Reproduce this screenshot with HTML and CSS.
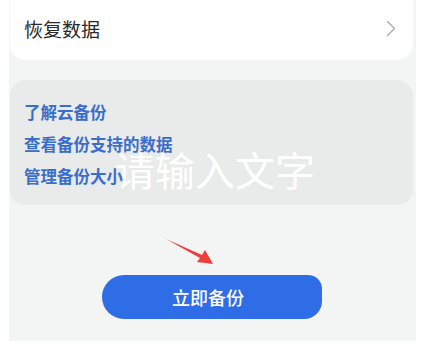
FILE: index.html
```html
<!DOCTYPE html>
<html lang="zh">
<head>
<meta charset="utf-8">
<link rel="stylesheet" href="styles.css">
</head>
<body>
<div class="screen">
  <div class="row-card">
    <span class="row-title">恢复数据</span>
    <svg class="chevron" width="10" height="17" viewBox="0 0 10 17"><path d="M1.5 1.5 L8.5 8.5 L1.5 15.5" fill="none" stroke="#a9abad" stroke-width="1.4" stroke-linecap="round" stroke-linejoin="round"/></svg>
  </div>
  <div class="links-card">
    <a class="link">了解云备份</a>
    <a class="link">查看备份支持的数据</a>
    <a class="link">管理备份大小</a>
  </div>
  <div class="bottom">
    <button class="primary">立即备份</button>
  </div>
  <div class="watermark">请输入文字</div>
  <svg class="arrow" width="52" height="32" viewBox="0 0 52 32"><path d="M2 2 L36 21 L33 25 L49 27 L41 13 L38 18 Z" fill="#ee3d3d"/></svg>
</div>
</body>
</html>
```
FILE: styles.css
```css
html, body { margin: 0; padding: 0; background: #ffffff; }
body { font-family: "Noto Sans CJK SC", "Noto Sans", sans-serif; }
.screen {
  position: relative;
  margin-left: 9px;
  width: 407px;
  height: 341px;
  background: #f3f4f4;
  padding: 0 3px 0 1px;
  box-sizing: border-box;
}
.row-card {
  height: 60px;
  background: #ffffff;
  border-radius: 0 0 16px 16px;
  display: flex;
  align-items: center;
  justify-content: space-between;
  padding: 0 17px 0 14px;
  box-sizing: border-box;
}
.row-title { font-size: 19px; color: #2a2a2a; line-height: 1; margin-top: -3px; }
.chevron { margin-top: -4px; }
.links-card {
  margin-top: 20px;
  height: 125px;
  background: #e9eaea;
  border-radius: 16px;
  padding: 23px 14px 0;
  box-sizing: border-box;
  display: flex;
  flex-direction: column;
  gap: 14px;
}
.link { font-size: 16.5px; line-height: 18px; font-weight: 700; color: #3b6ecb; }
.bottom { padding: 70px 0 0 92px; }
.primary {
  width: 220px;
  height: 44px;
  border: none;
  border-radius: 22px 14px 18px 22px;
  background: #2f6de6;
  color: #ffffff;
  font-family: "Noto Sans CJK SC", sans-serif;
  font-size: 18px;
  font-weight: 500;
  padding: 0 8px 0 0;
}
.watermark {
  position: absolute;
  left: 106px;
  top: 145px;
  font-size: 40px;
  line-height: 48px;
  color: #ffffff;
}
.arrow { position: absolute; left: 155px; top: 237px; }
```
